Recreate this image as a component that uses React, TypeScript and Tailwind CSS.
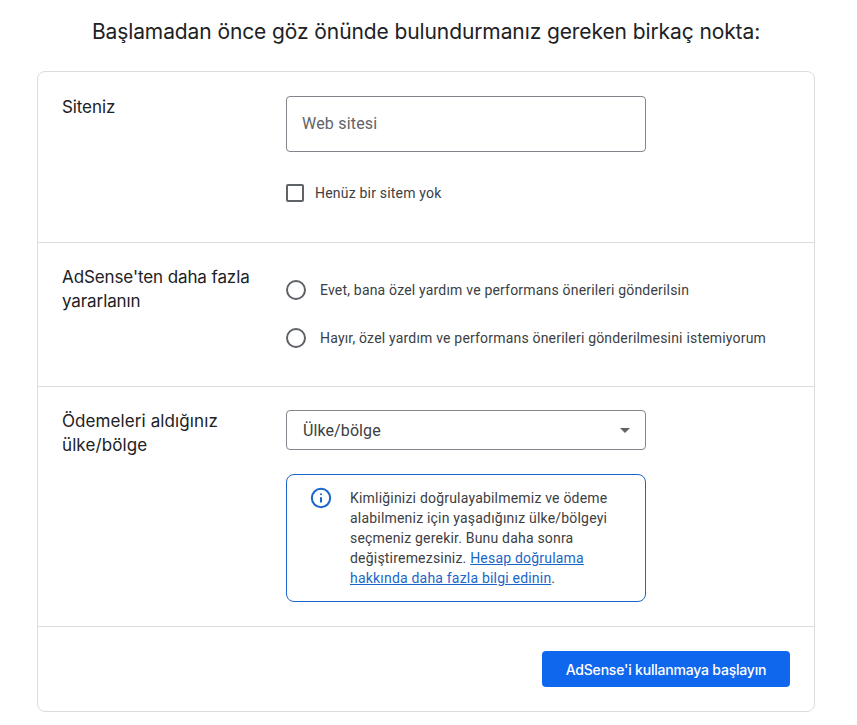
import { Info } from 'lucide-react';

export default function App() {
  return (
    <div className="min-h-screen bg-white pt-[19px] font-['Roboto',sans-serif] text-[#202124]">
      <h1 className="text-center pr-[5px] font-['Inter',sans-serif] text-[21px] leading-[26px] tracking-[-0.1px] mb-[26px]">
        Başlamadan önce göz önünde bulundurmanız gereken birkaç nokta:
      </h1>

      <div className="ml-[37px] w-[778px] h-[641px] rounded-[8px] border border-[#dadce0] flex flex-col">
        <section className="h-[171px] border-b border-[#dadce0] flex pl-[24px] pt-[23px]">
          <div className="w-[224px] font-['Inter',sans-serif] text-[17px] leading-[24px] tracking-[-0.1px]">Siteniz</div>
          <div className="pt-[1px]">
            <div className="w-[360px] h-[56px] rounded-[4px] border border-[#80868b] pl-[15px] flex items-center text-[16px] tracking-[0.2px] text-[#5f6368]">
              Web sitesi
            </div>
            <label className="mt-[31px] flex items-center gap-[11px] text-[14px] leading-[20px] tracking-[0.2px] text-[#3c4043]">
              <span className="w-[18px] h-[18px] rounded-[2px] border-2 border-[#5f6368]" />
              Henüz bir sitem yok
            </label>
          </div>
        </section>

        <section className="h-[144px] border-b border-[#dadce0] flex pl-[24px] pt-[22px]">
          <div className="w-[224px] font-['Inter',sans-serif] text-[17px] leading-[24px] tracking-[-0.1px]">
            AdSense'ten daha fazla
            <br />
            yararlanın
          </div>
          <div className="pt-[15px] flex flex-col gap-[28px] text-[14px] leading-[20px] tracking-[0.19px] text-[#3c4043]">
            <label className="flex items-center gap-[14px]">
              <span className="w-[20px] h-[20px] rounded-full border-2 border-[#5f6368]" />
              Evet, bana özel yardım ve performans önerileri gönderilsin
            </label>
            <label className="flex items-center gap-[14px]">
              <span className="w-[20px] h-[20px] rounded-full border-2 border-[#5f6368]" />
              Hayır, özel yardım ve performans önerileri gönderilmesini istemiyorum
            </label>
          </div>
        </section>

        <section className="h-[240px] border-b border-[#dadce0] flex pl-[24px] pt-[22px]">
          <div className="w-[224px] font-['Inter',sans-serif] text-[17px] leading-[24px] tracking-[0.1px]">
            Ödemeleri aldığınız
            <br />
            ülke/bölge
          </div>
          <div className="pt-[1px]">
            <div className="w-[360px] h-[40px] rounded-[4px] border border-[#80868b] pl-[16px] pr-[15px] pt-[1px] flex items-center justify-between text-[16px] tracking-[0.1px] text-[#3c4043]">
              Ülke/bölge
              <span className="w-0 h-0 border-x-[5px] border-x-transparent border-t-[5px] border-t-[#5f6368]" />
            </div>
            <div className="mt-[24px] w-[360px] h-[128px] rounded-[8px] border border-[#1a66c9] flex pl-[23px] pt-[12px]">
              <Info size={22} strokeWidth={2.2} className="text-[#1a66c9] shrink-0" />
              <p className="ml-[18px] mt-[1px] text-[14px] leading-[20px] tracking-[0.2px] text-[#3c4043]">
                Kimliğinizi doğrulayabilmemiz ve ödeme
                <br />
                alabilmeniz için yaşadığınız ülke/bölgeyi
                <br />
                seçmeniz gerekir. Bunu daha sonra
                <br />
                değiştiremezsiniz.{' '}
                <a className="text-[#1a66c9] underline">
                  Hesap doğrulama
                  <br />
                  hakkında daha fazla bilgi edinin
                </a>
                .
              </p>
            </div>
          </div>
        </section>

        <section className="flex-1 flex justify-end pt-[24px] pr-[24px]">
          <button className="w-[248px] h-[36px] rounded-[4px] bg-[#0f67ee] text-white font-['Inter',sans-serif] text-[14px] tracking-[-0.2px] font-medium">
            AdSense'i kullanmaya başlayın
          </button>
        </section>
      </div>
    </div>
  );
}
